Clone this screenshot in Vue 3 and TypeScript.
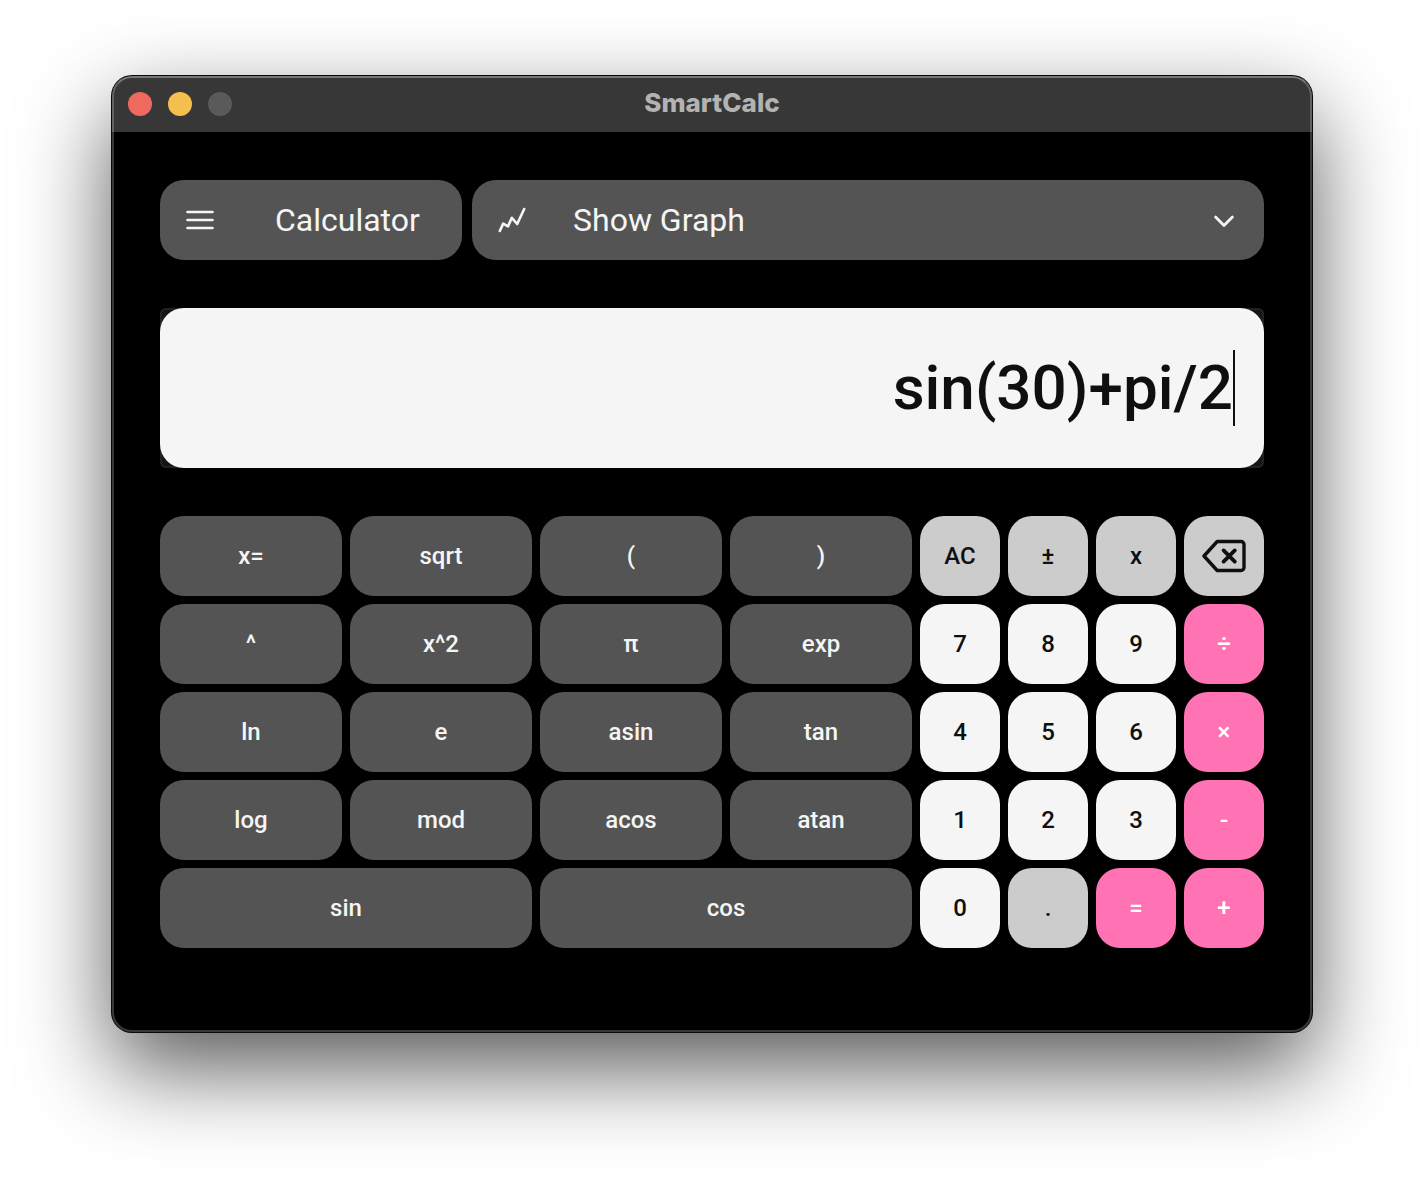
<script setup lang="ts">
import { ref } from 'vue'

type Tone = 'func' | 'util' | 'digit' | 'op'

interface Key {
  label: string
  tone: Tone
  wide?: boolean
  icon?: 'backspace'
}

const f = (label: string, wide = false): Key => ({ label, tone: 'func', wide })
const u = (label: string): Key => ({ label, tone: 'util' })
const d = (label: string): Key => ({ label, tone: 'digit' })
const o = (label: string): Key => ({ label, tone: 'op' })

const keys: Key[] = [
  f('x='), f('sqrt'), f('('), f(')'), u('AC'), u('±'), u('x'),
  { label: 'Backspace', tone: 'util', icon: 'backspace' },
  f('^'), f('x^2'), f('π'), f('exp'), d('7'), d('8'), d('9'), o('÷'),
  f('ln'), f('e'), f('asin'), f('tan'), d('4'), d('5'), d('6'), o('×'),
  f('log'), f('mod'), f('acos'), f('atan'), d('1'), d('2'), d('3'), o('-'),
  f('sin', true), f('cos', true), d('0'), u('.'), o('='), o('+'),
]

const expression = ref('sin(30)+pi/2')
const graphOpen = ref(false)

function press(key: Key) {
  if (key.icon === 'backspace') expression.value = expression.value.slice(0, -1)
  else if (key.label === 'AC') expression.value = ''
  else if (key.label === 'π') expression.value += 'pi'
  else if (key.label === '÷') expression.value += '/'
  else if (key.label === '×') expression.value += '*'
  else if (key.label === 'x^2') expression.value += '^2'
  else if (!['=', 'x=', '±'].includes(key.label)) expression.value += key.label
}
</script>

<template>
  <main class="desktop">
    <section class="window">
      <header class="titlebar">
        <div class="lights">
          <button class="light close" type="button" aria-label="Close"></button>
          <button class="light minimize" type="button" aria-label="Minimize"></button>
          <button class="light zoom" type="button" aria-label="Zoom" disabled></button>
        </div>
        <h1 class="title">SmartCalc</h1>
      </header>

      <div class="body">
        <nav class="toolbar">
          <button class="bar-button mode" type="button">
            <svg class="icon" viewBox="0 0 28 28" aria-hidden="true">
              <path d="M1.500 6h25M1.500 14h25M1.500 22h25" stroke-width="2.600" />
            </svg>
            <span>Calculator</span>
          </button>
          <button
            class="bar-button graph"
            type="button"
            :aria-expanded="graphOpen"
            @click="graphOpen = !graphOpen"
          >
            <svg class="icon trend" viewBox="0 0 28 28" aria-hidden="true">
              <path d="M1.800 25L5.200 17.600L10 20.400L13.800 11.800L19.200 18L26.200 3" stroke-width="2.600" />
            </svg>
            <span>Show Graph</span>
            <svg class="icon chevron" viewBox="0 0 28 28" aria-hidden="true">
              <path d="M5.600 11L14 19.400L22.400 11" stroke-width="2.800" />
            </svg>
          </button>
        </nav>

        <div class="display-frame">
          <div class="display">
            <input v-model="expression" type="text" aria-label="Expression" spellcheck="false" />
            <span class="caret"></span>
          </div>
        </div>

        <div class="keypad">
          <button
            v-for="key in keys"
            :key="key.tone + key.label"
            type="button"
            class="key"
            :class="[key.tone, { wide: key.wide }]"
            :aria-label="key.icon ? key.label : undefined"
            @click="press(key)"
          >
            <svg v-if="key.icon" class="backspace" viewBox="0 0 44 34" aria-hidden="true">
              <path d="M15.200 2.500H39a3 3 0 0 1 3 3V28.500a3 3 0 0 1-3 3H15.200L2 17z" stroke-width="3.400" />
              <path d="M21.600 11.400L32.800 22.600M32.800 11.400L21.600 22.600" stroke-width="3.800" />
            </svg>
            <template v-else>{{ key.label }}</template>
          </button>
        </div>
      </div>
    </section>
  </main>
</template>

<style>
body {
  background: #fff;
}
</style>

<style scoped>
.desktop {
  padding: 76px 112px 148px;
  overflow: hidden;
  font-family: Roboto, "Liberation Sans", sans-serif;
}

.window {
  position: relative;
  border-radius: 20px;
  background: #000;
  box-shadow: 0 0 0 1px #0a0a0a, 0 36px 90px rgba(0, 0, 0, 0.66);
}

/* light rim drawn over the title bar and the body */
.window::after {
  content: "";
  position: absolute;
  inset: 0;
  border: 2px solid rgba(255, 255, 255, 0.22);
  border-top-color: rgba(255, 255, 255, 0.32);
  border-radius: 20px;
  pointer-events: none;
}

.titlebar {
  display: grid;
  grid-template-columns: 1fr auto 1fr;
  align-items: center;
  height: 56px;
  padding: 0 16px;
  border-radius: 20px 20px 0 0;
  background: #373737;
}

.lights {
  display: flex;
  gap: 16px;
}

.light {
  width: 24px;
  height: 24px;
  padding: 0;
  border: 0;
  border-radius: 50%;
}

.close {
  background: #ee6a5f;
}

.minimize {
  background: #f5bf4f;
}

.zoom {
  background: #5a5a5a;
}

.title {
  margin: 0;
  padding-bottom: 2px;
  color: #b3b3b3;
  font-family: Inter, Roboto, sans-serif;
  font-size: 26px;
  font-weight: 800;
  line-height: 32px;
}

.body {
  display: flex;
  flex-direction: column;
  gap: 48px;
  padding: 48px 48px 84px;
}

.toolbar {
  display: flex;
  gap: 10px;
}

.bar-button {
  display: flex;
  align-items: center;
  height: 80px;
  padding: 0 26px;
  border: 0;
  border-radius: 24px;
  background: #545454;
  color: #f5f5f5;
  font: 400 32px/40px Roboto, "Liberation Sans", sans-serif;
}

.mode {
  gap: 61px;
  width: 302px;
}

.graph {
  flex: 1;
  gap: 47px;
}

.icon {
  flex: none;
  width: 28px;
  height: 28px;
  fill: none;
  stroke: #f5f5f5;
  stroke-linecap: round;
  stroke-linejoin: round;
}

.chevron {
  margin-left: auto;
}

.display-frame {
  border-radius: 6px;
  background: #151515;
  box-shadow: inset 0 0 0 2px #222;
}

.display {
  display: flex;
  align-items: center;
  height: 160px;
  padding: 0 29px;
  border-radius: 24px;
  box-sizing: border-box;
  background: #f5f5f5;
}

.display input {
  flex: 1;
  min-width: 0;
  padding: 0;
  border: 0;
  outline: 0;
  background: transparent;
  color: #0f0f0f;
  font: 500 62px/76px Roboto, "Liberation Sans", sans-serif;
  text-align: right;
}

.caret {
  width: 2px;
  height: 76px;
  background: #0f0f0f;
}

.keypad {
  display: grid;
  grid-template-columns: repeat(4, 1fr) repeat(4, 80px);
  grid-auto-rows: 80px;
  gap: 8px;
}

.key {
  display: flex;
  align-items: center;
  justify-content: center;
  padding: 0;
  border: 0;
  border-radius: 24px;
  font: 500 24px/28px Roboto, "Liberation Sans", sans-serif;
}

.wide {
  grid-column: span 2;
}

.func {
  background: #545454;
  color: #f5f5f5;
}

.util {
  background: #ccc;
  color: #0f0f0f;
}

.digit {
  background: #f5f5f5;
  color: #0f0f0f;
}

.op {
  background: #ff73b4;
  color: #fff;
}

.backspace {
  width: 44px;
  height: 34px;
  fill: none;
  stroke: #0f0f0f;
  stroke-linecap: round;
  stroke-linejoin: round;
}
</style>
